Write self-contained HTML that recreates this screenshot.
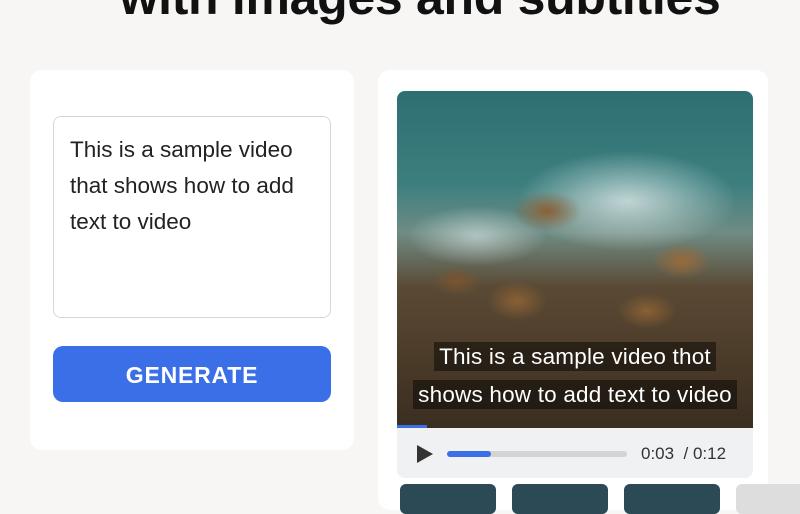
<!DOCTYPE html><html><head><style>
body{margin:0;width:800px;height:500px;overflow:hidden;background:#f7f6f4;font-family:"Liberation Sans",sans-serif;position:relative}
.t{position:absolute;left:20px;width:800px;top:-32px;text-align:center;font-size:50px;font-weight:bold;color:#111;letter-spacing:-0.3px}
.card{position:absolute;background:#fff;border-radius:12px}
.ta{position:absolute;left:53px;top:116px;width:278px;height:202px;border:1px solid #d6d6d6;border-radius:8px;background:#fff;box-sizing:border-box;padding:15px 16px;font-size:22.5px;line-height:36px;color:#222}
.btn{position:absolute;left:53px;top:346px;width:278px;height:56px;background:#3a6fe8;border-radius:10px;color:#fff;font-size:23px;font-weight:bold;text-align:center;line-height:58px;letter-spacing:0.8px}
.vid{position:absolute;left:397px;top:91px;width:356px;height:337px;border-radius:8px 8px 0 0;overflow:hidden;
background:
radial-gradient(ellipse 30px 18px at 285px 170px,#9a6a3a,transparent),
radial-gradient(ellipse 35px 20px at 150px 120px,#8a6035,transparent),
radial-gradient(ellipse 25px 15px at 60px 190px,#7a5530,transparent),
radial-gradient(ellipse 30px 20px at 120px 210px,#8a6035,transparent),
radial-gradient(ellipse 30px 18px at 250px 220px,#8a6035,transparent),
radial-gradient(ellipse 110px 50px at 230px 110px,rgba(230,240,240,.75),transparent),
radial-gradient(ellipse 70px 30px at 80px 145px,rgba(220,235,235,.6),transparent),
linear-gradient(180deg,#2e6f72 0%,#3d7f7f 28%,#6f8c84 42%,#5a4a35 58%,#4a3a28 80%,#3a2e22 100%)}
.sub{position:absolute;left:0;width:356px;text-align:center;color:#fff;font-size:22.5px;letter-spacing:0.2px}
.sub span{background:rgba(0,0,0,.45);padding:2px 5px}
.ctl{position:absolute;left:397px;top:428px;width:356px;height:50px;background:#f0f1f3;border-radius:0 0 8px 8px}
.th{position:absolute;top:484px;width:96px;height:30px;background:#2c4a55;border-radius:6px}
</style></head><body>
<div class="t">with images and subtitles</div>
<div class="card" style="left:30px;top:70px;width:324px;height:380px"></div>
<div class="card" style="left:378px;top:70px;width:390px;height:440px"></div>
<div class="ta">This is a sample video that shows how to add text to video</div>
<div class="btn">GENERATE</div>
<div class="vid">
<div class="sub" style="top:253px"><span>This is a sample video thot</span></div>
<div class="sub" style="top:291px"><span>shows how to add text to video</span></div>
<div style="position:absolute;left:0;bottom:0;width:30px;height:3px;background:#3a6fe8"></div>
</div>
<div class="ctl">
<svg style="position:absolute;left:19px;top:16px" width="18" height="20"><path d="M1 1L17 10L1 19Z" fill="#333"/></svg>
<div style="position:absolute;left:50px;top:23px;width:180px;height:6px;background:#d4d4d4;border-radius:3px"></div>
<div style="position:absolute;left:50px;top:23px;width:44px;height:6px;background:#3a6fe8;border-radius:3px"></div>
<div style="position:absolute;left:244px;top:16px;font-size:17px;color:#333">0:03 &nbsp;/ 0:12</div>
</div>
<div class="th" style="left:400px"></div><div class="th" style="left:512px"></div><div class="th" style="left:624px"></div><div class="th" style="left:736px;background:#ddd"></div>
</body></html>
